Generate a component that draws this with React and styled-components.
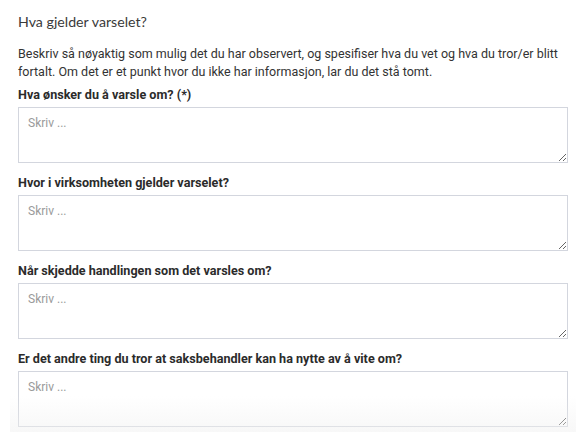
import React from "react";
import styled, { createGlobalStyle } from "styled-components";

const GlobalStyle = createGlobalStyle`
  html, body {
    margin: 0;
    padding: 0;
    background: #ffffff;
  }
  body {
    font-family: Roboto, "Liberation Sans", Arial, sans-serif;
    color: #333333;
  }
`;

const Page = styled.div`
  position: relative;
  width: 588px;
  height: 448px;
  overflow: hidden;
  padding: 12px 20px 0 18px;
  box-sizing: border-box;
`;

const Heading = styled.h2`
  margin: 0 0 13px;
  font-family: Lato, "Open Sans", sans-serif;
  font-size: 14.2px;
  font-weight: 400;
  line-height: 20px;
  color: #3a3a3a;
`;

const Intro = styled.p`
  margin: 0 0 5px;
  font-size: 12.5px;
  line-height: 18px;
  color: #333333;
`;

const Field = styled.div`
  display: flex;
  flex-direction: column;
  gap: 3px;
  margin-bottom: 11px;
`;

const Label = styled.label`
  font-size: 12.6px;
  font-weight: 700;
  line-height: 18px;
  color: #2b2b2b;
`;

const TextArea = styled.textarea`
  display: block;
  box-sizing: border-box;
  width: 550px;
  height: 56px;
  margin: 0;
  padding: 7px 9px;
  border: 1px solid #d3d6de;
  border-radius: 0;
  font-family: Roboto, "Liberation Sans", Arial, sans-serif;
  font-size: 12px;
  line-height: 16px;
  color: #333;
  resize: vertical;
  outline: none;

  &::placeholder {
    color: #9a9a9a;
  }
`;

const Fade = styled.div`
  position: absolute;
  left: 10px;
  right: 12px;
  top: 396px;
  height: 36px;
  pointer-events: none;
  background: linear-gradient(to bottom, rgba(244, 244, 244, 0) 0%, rgba(240, 240, 240, 0.5) 100%);
`;

const fields = [
  "Hva ønsker du å varsle om? (*)",
  "Hvor i virksomheten gjelder varselet?",
  "Når skjedde handlingen som det varsles om?",
  "Er det andre ting du tror at saksbehandler kan ha nytte av å vite om?",
];

export default function App() {
  return (
    <>
      <GlobalStyle />
      <Page>
        <Heading>Hva gjelder varselet?</Heading>
        <Intro>
          Beskriv så nøyaktig som mulig det du har observert, og spesifiser hva du vet og hva du tror/er blitt
          fortalt. Om det er et punkt hvor du ikke har informasjon, lar du det stå tomt.
        </Intro>
        {fields.map((label, i) => (
          <Field key={i}>
            <Label htmlFor={`f${i}`}>{label}</Label>
            <TextArea id={`f${i}`} placeholder="Skriv ..." />
          </Field>
        ))}
        <Fade />
      </Page>
    </>
  );
}
